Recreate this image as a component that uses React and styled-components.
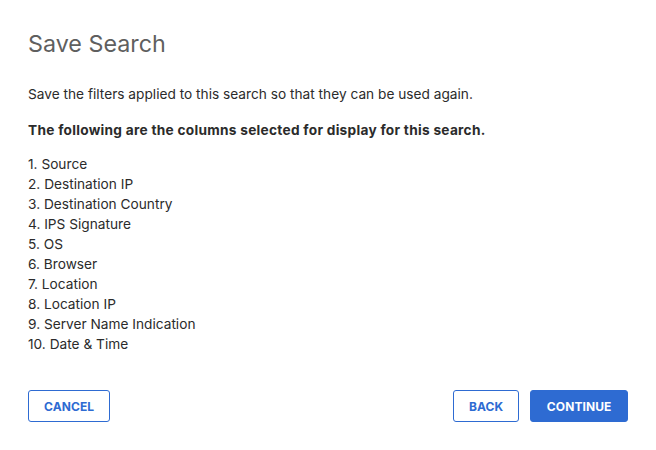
import React from "react";
import styled, {createGlobalStyle} from "styled-components";

const GlobalStyle = createGlobalStyle`
  body {
    margin: 0;
    background: #fff;
    font-family: Inter, "Noto Sans", sans-serif;
  }
`;

const Dialog = styled.div`
  width: 656px;
  height: 450px;
  box-sizing: border-box;
  padding: 30px 28px 0 28px;
  display: flex;
  flex-direction: column;
  color: #2b2b2b;
`;

const Title = styled.h1`
  margin: 0;
  font-size: 23.3px;
  font-weight: 400;
  color: #5f5f5f;
  line-height: 28px;
`;

const Text = styled.p`
  margin: ${p => p.top}px 0 0 0;
  font-size: 13.7px;
  line-height: 20px;
  font-weight: ${p => (p.bold ? 700 : 400)};
  letter-spacing: ${p => (p.bold ? "0.27px" : "0")};
`;

const List = styled.ol`
  margin: 14px 0 0 0;
  padding: 0;
  list-style: none;
  font-size: 13.7px;
  line-height: 20px;
`;

const Footer = styled.div`
  margin-top: 36px;
  display: flex;
  align-items: center;
  gap: 11px;
`;

const Spacer = styled.div`
  flex: 1;
`;

const Button = styled.button`
  height: 32px;
  padding: 0 ${p => p.pad}px;
  border-radius: 3px;
  border: 1px solid #2e6bd2;
  background: ${p => (p.primary ? "#2e6bd2" : "#fff")};
  color: ${p => (p.primary ? "#fff" : "#2e6bd2")};
  font-family: Inter, "Noto Sans", sans-serif;
  font-size: 12px;
  font-weight: 700;
  letter-spacing: 0.1px;
  cursor: pointer;
`;

const columns = [
    "Source",
    "Destination IP",
    "Destination Country",
    "IPS Signature",
    "OS",
    "Browser",
    "Location",
    "Location IP",
    "Server Name Indication",
    "Date & Time"
];

export default function App() {
    return (
        <>
            <GlobalStyle/>
            <Dialog>
                <Title>Save Search</Title>
                <Text top={26}>Save the filters applied to this search so that they can be used again.</Text>
                <Text top={16} bold>The following are the columns selected for display for this search.</Text>
                <List>
                    {columns.map((c, i) => (
                        <li key={c}>{i + 1}. {c}</li>
                    ))}
                </List>
                <Footer>
                    <Button pad={15}>CANCEL</Button>
                    <Spacer/>
                    <Button pad={15}>BACK</Button>
                    <Button primary pad={15.5}>CONTINUE</Button>
                </Footer>
            </Dialog>
        </>
    );
}
